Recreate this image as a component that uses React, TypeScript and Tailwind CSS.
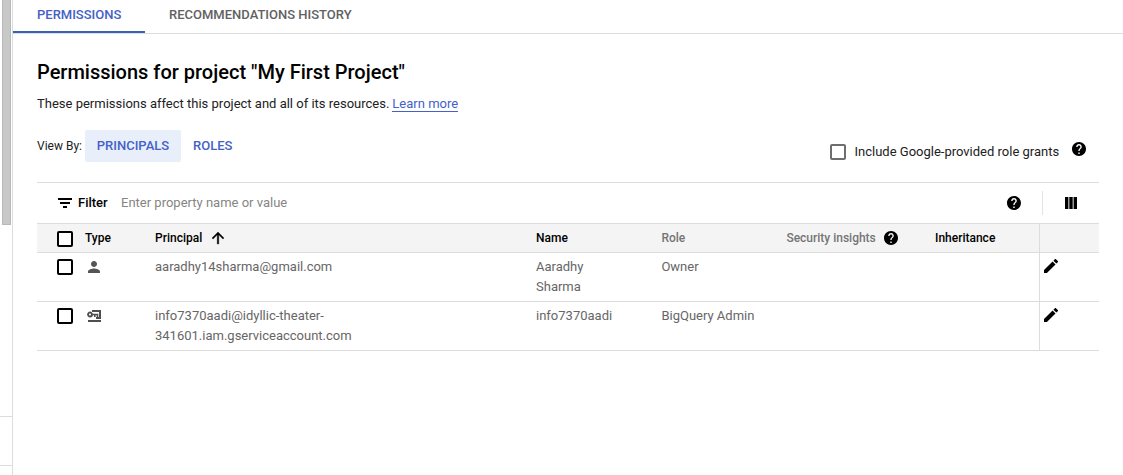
import type { ReactNode } from "react";

const GRID =
  "grid grid-cols-[48px_70px_381px_125px_125px_149px_104px_60px] border-b border-[#dcdcdc]";

function HelpIcon() {
  return (
    <svg className="block size-3.5 shrink-0" viewBox="2 2 20 20" fill="#000">
      <path d="M12 2C6.48 2 2 6.48 2 12s4.48 10 10 10 10-4.48 10-10S17.52 2 12 2zm1 17h-2v-2h2v2zm2.07-7.75l-.9.92C13.45 12.9 13 13.5 13 15h-2v-.5c0-1.1.45-2.1 1.17-2.83l1.24-1.26c.37-.36.59-.86.59-1.41 0-1.1-.9-2-2-2s-2 .9-2 2H8c0-2.21 1.79-4 4-4s4 1.79 4 4c0 .88-.36 1.68-.93 2.25z" />
    </svg>
  );
}

function PersonIcon() {
  return (
    <svg className="block size-[18px]" viewBox="0 0 24 24" fill="#555">
      <path d="M12 12c2.21 0 4-1.79 4-4s-1.79-4-4-4-4 1.79-4 4 1.79 4 4 4zm0 2c-2.67 0-8 1.34-8 4v2h16v-2c0-2.66-5.33-4-8-4z" />
    </svg>
  );
}

function ServiceAccountIcon() {
  return (
    <svg className="block size-[18px]" viewBox="0 0 18 18" fill="none" stroke="#4f4f4f">
      <path d="M7 4h8v7h-4M3 14h13" strokeWidth="2" />
      <circle cx="5" cy="7.5" r="2" strokeWidth="1.8" />
      <path d="M7 7.5h5.5V10M9.8 7.5V10" strokeWidth="1.6" />
    </svg>
  );
}

function PencilIcon() {
  return (
    <svg className="block size-3.5" viewBox="3 3 18 18" fill="#000">
      <path d="M3 17.25V21h3.75L17.81 9.94l-3.75-3.75L3 17.25zM20.71 7.04c.39-.39.39-1.02 0-1.41l-2.34-2.34c-.39-.39-1.02-.39-1.41 0l-1.83 1.83 3.75 3.75 1.83-1.83z" />
    </svg>
  );
}

function Checkbox({ muted = false }: { muted?: boolean }) {
  return (
    <span
      role="checkbox"
      aria-checked="false"
      className={`block size-4 shrink-0 rounded-[2px] border-2 bg-white ${muted ? "border-[#6e6e6e]" : "border-black"}`}
    />
  );
}

function Row({ icon, principal, name, role }: { icon: ReactNode; principal: ReactNode; name: ReactNode; role: string }) {
  return (
    <div className={`${GRID} h-[49px] text-[13px] leading-5 text-[#666]`}>
      <div className="pt-1.5 pl-5"><Checkbox /></div>
      <div className="pt-[5px]">{icon}</div>
      <div className="pt-1">{principal}</div>
      <div className="pt-1">{name}</div>
      <div className="pt-1 pl-[0.4px]">{role}</div>
      <div />
      <div />
      <div className="border-l border-[#dcdcdc] pt-1.5 pl-1"><PencilIcon /></div>
    </div>
  );
}

export default function App() {
  return (
    <div className="flex h-[475px] w-[1123px] overflow-hidden bg-white font-['Roboto',sans-serif] text-[13px] text-[#212121]">
      <aside className="flex w-[13px] shrink-0 flex-col border-r border-[#dcdcdc]">
        <div className="ml-0.5 h-[225px] w-[9px] border-x border-b border-[#b8b8b8] bg-[#c8c8c8]" />
        <div className="h-[192px] border-b border-[#dcdcdc]" />
        <div className="h-[49px] border-b border-[#dcdcdc]" />
      </aside>
      <main className="flex-1">
        <nav className="flex h-[34px] border-b border-[#dcdcdc] text-[13px] leading-[30px] font-medium">
          <div className="h-[33px] w-[132px] border-b-2 border-[#3b63b5] pl-6 text-[#4461c7]">PERMISSIONS</div>
          <div className="pl-6 text-[#616161]">RECOMMENDATIONS HISTORY</div>
        </nav>
        <div className="w-[1086px] pl-6">
          <h1 className="mt-[26px] text-[20px] leading-6 font-medium text-black">Permissions for project "My First Project"</h1>
          <p className="mt-3 flex h-4 leading-4">
            <span className="mr-[3px]">These permissions affect this project and all of its resources.</span>
            <a className="h-4 border-b border-[#4461c7] text-[#4461c7]">Learn more</a>
          </p>
          <div className="mt-[18px] flex h-[52px] items-start">
            <span className="w-12 text-[12px] leading-8 whitespace-nowrap">View By:</span>
            <button className="h-8 w-24 rounded-[2px] bg-[#e8effb] font-medium text-[#4461c7]">PRINCIPALS</button>
            <button className="h-8 px-3 font-medium text-[#4461c7]">ROLES</button>
            <div className="mr-[13px] ml-auto flex pt-3.5">
              <Checkbox muted />
              <span className="ml-2 w-[218px] pl-[0.5px] leading-4">Include Google-provided role grants</span>
              <div className="-mt-0.5"><HelpIcon /></div>
            </div>
          </div>
          <section className="border-t border-[#dcdcdc]">
            <div className="flex h-[41px] items-center border-b border-[#dcdcdc] pl-[21px]">
              <svg className="h-2.5 w-3.5" viewBox="0 0 14 10" fill="#000">
                <path d="M0 0h14v2H0zM2 4h10v2H2zM5 8h4v2H5z" />
              </svg>
              <span className="ml-1.5 w-[43px] font-medium text-black">Filter</span>
              <span className="text-[#858585]">Enter property name or value</span>
              <div className="-mt-px ml-auto"><HelpIcon /></div>
              <div className="ml-[21px] h-6 border-l border-[#e4e4e4]" />
              <svg className="-mt-px mr-[22px] ml-[22px] h-3 w-3" viewBox="0 0 12 12" fill="#000">
                <path d="M0 0h3.4v12H0zM4.3 0h3.4v12H4.3zM8.6 0H12v12H8.6z" />
              </svg>
            </div>
            <div className={`${GRID} h-[29px] bg-[#f4f4f4] text-[12px] leading-7 font-medium text-black`}>
              <div className="pt-[7px] pl-5"><Checkbox /></div>
              <div>Type</div>
              <div className="flex">
                Principal
                <svg className="mt-[5px] ml-[7px] size-[18px]" viewBox="0 0 24 24" fill="#000">
                  <path stroke="#000" strokeWidth=".5" d="M4 12l1.41 1.41L11 7.83V20h2V7.83l5.58 5.59L20 12l-8-8-8 8z" />
                </svg>
              </div>
              <div>Name</div>
              <div className="pl-[0.4px] text-[#757575]">Role</div>
              <div className="flex items-center text-[#757575]">
                <span className="w-[98px] pl-[0.4px]">Security insights</span>
                <HelpIcon />
              </div>
              <div>Inheritance</div>
              <div className="border-l border-[#dcdcdc]" />
            </div>
            <Row icon={<PersonIcon />} principal="aaradhy14sharma@gmail.com" name={<>Aaradhy<br />Sharma</>} role="Owner" />
            <Row
              icon={<ServiceAccountIcon />}
              principal={<>info7370aadi@idyllic-theater-<br />341601.iam.gserviceaccount.com</>}
              name="info7370aadi"
              role="BigQuery Admin"
            />
          </section>
        </div>
      </main>
    </div>
  );
}
